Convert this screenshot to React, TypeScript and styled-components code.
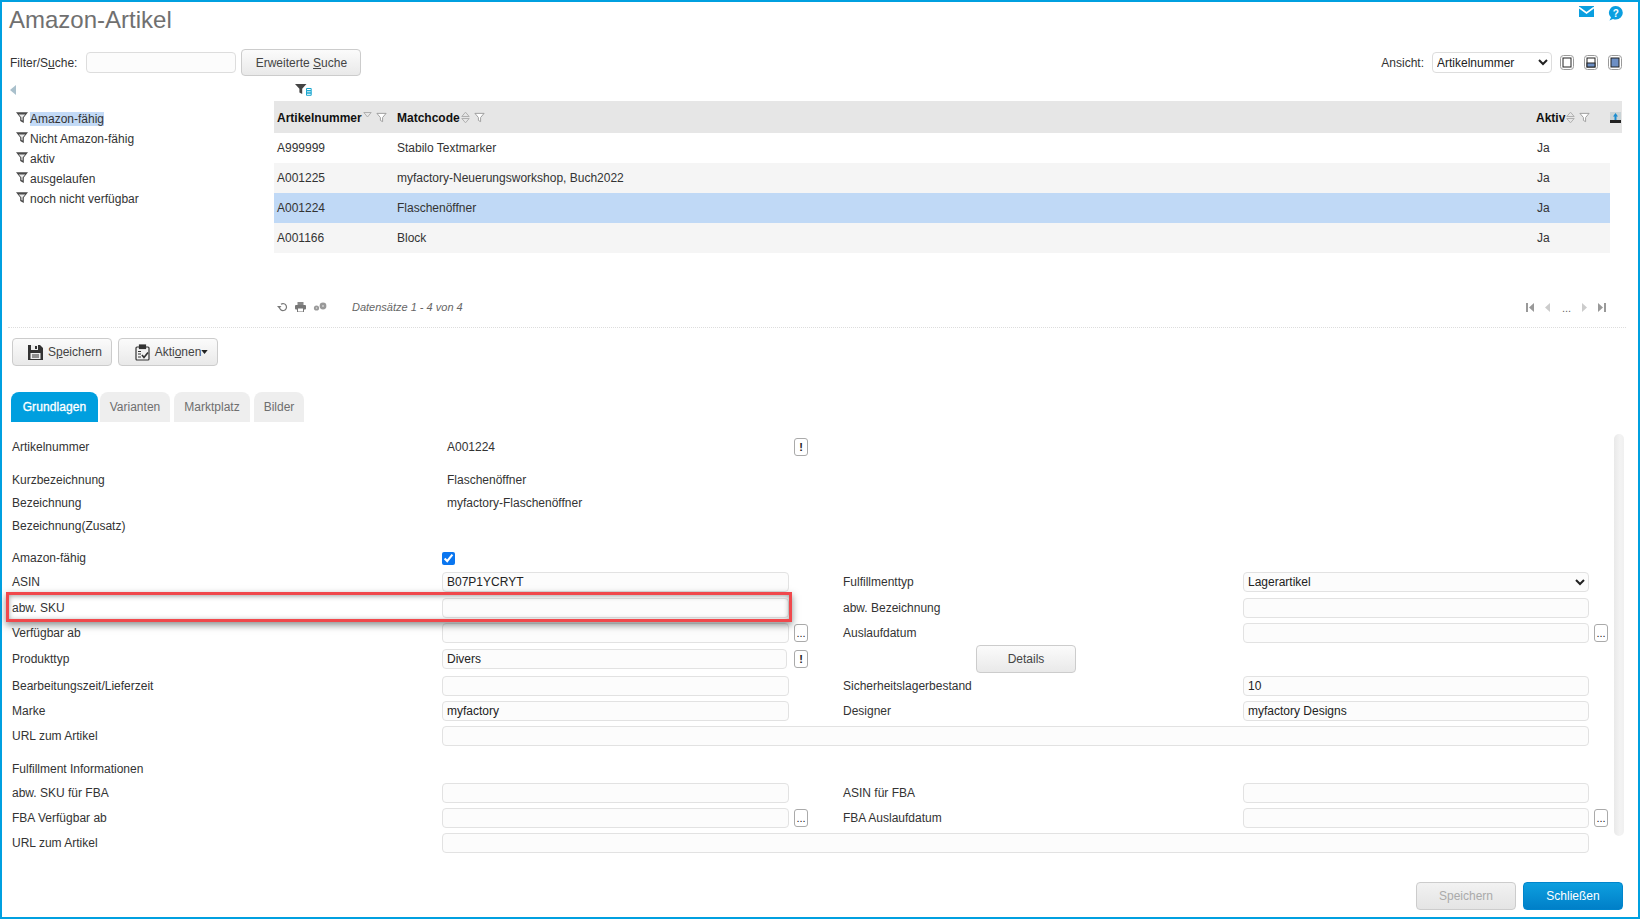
import React from "react";
import styled, { createGlobalStyle } from "styled-components";

const Global = createGlobalStyle`
  html, body { margin: 0; padding: 0; background: #fff; }
  body { font-family: "Liberation Sans", Arial, sans-serif; font-size: 12px; color: #333; }
  * { box-sizing: border-box; }
`;

const Frame = styled.div`
  width: 1640px; height: 919px; border: 2px solid #00a0e0; overflow: hidden; background: #fff;
  display: flex; flex-direction: column;
`;
const TitleRow = styled.div`
  height: 38px; display: flex; justify-content: space-between; align-items: flex-start; padding: 0 14px 0 7px;
`;
const Title = styled.h1`
  margin: 4px 0 0; font-size: 24px; line-height: 28px; font-weight: 400; color: #707070;
`;
const TopIcons = styled.div`
  display: flex; gap: 14px; padding-top: 4px; padding-right: 1px;
`;
const FilterBar = styled.div`
  margin-top: 9px; height: 27px; display: flex; align-items: center; padding: 0 16px 0 8px;
`;
const BarLabel = styled.span`
  color: #333; font-size: 12px;
`;
const SearchInput = styled.input`
  width: 150px; height: 21px; margin-left: 9px; border: 1px solid #ddd; border-radius: 4px; background: #fcfcfc;
`;
const Button = styled.button<{ $w: number; $h?: number; $pl?: number }>`
  width: ${p => p.$w}px; height: ${p => p.$h ?? 28}px; flex: none; padding: 0 0 0 ${p => p.$pl ?? 0}px; border: 1px solid #ccc; border-radius: 4px;
  background: linear-gradient(#fbfbfb, #e9e9e9); color: #444; font: 12px "Liberation Sans", Arial, sans-serif;
  display: inline-flex; align-items: center; justify-content: center; gap: 5px;
`;
const SearchButton = styled(Button)`
  margin-left: 5px;
`;
const Spacer = styled.div`
  flex: 1;
`;
const ViewSelect = styled.select`
  width: 120px; height: 21px; margin-left: 8px; border: 1px solid #ddd; border-radius: 4px; background: #fff; color: #222;
  font: 12px "Liberation Sans", Arial, sans-serif; padding: 0;
`;
const ViewButtons = styled.div`
  display: flex; gap: 10px; margin-left: 8px;
`;
const Split = styled.div`
  display: grid; grid-template-columns: 272px 1fr;
`;
const Side = styled.div`
  padding: 9px 0 0 8px;
`;
const Collapse = styled.div`
  width: 0; height: 0; border-style: solid; border-width: 5px 6px 5px 0; border-color: transparent #a9c0cc transparent transparent;
`;
const FilterList = styled.ul`
  list-style: none; margin: 14px 0 0; padding: 0 0 0 6px;
`;
const FilterItem = styled.li`
  height: 20px; display: flex; align-items: center; gap: 2px; color: #333;
`;
const FilterIcon = styled.span`
  display: flex; margin-bottom: 3px;
`;
const FilterName = styled.span<{ $on?: boolean }>`
  background: ${p => (p.$on ? "#c3daf6" : "transparent")}; line-height: 14px;
`;
const TableArea = styled.div`
  padding: 8px 16px 0 0;
`;
const TableTool = styled.div`
  height: 13px; margin: 0 0 4px 21px; display: flex;
`;
const HeaderRow = styled.div`
  height: 32px; padding-top: 1px; background: #e6e6e6; display: grid; grid-template-columns: 120px 1fr 77px 12px; align-items: center;
`;
const HeadCell = styled.div`
  display: flex; align-items: center; padding-left: 3px; font-size: 12px; font-weight: 700; color: #111; white-space: nowrap;
`;
const DataRow = styled.div<{ $bg: string }>`
  height: 30px; margin-right: 12px; background: ${p => p.$bg}; display: grid; grid-template-columns: 120px 1fr 76px; align-items: center; color: #333;
`;
const DataCell = styled.div`
  padding-left: 3px;
`;
const TableFoot = styled.div`
  margin-top: 44px; height: 20px; display: flex; align-items: center; padding-left: 3px; padding-right: 16px;
`;
const FootIcons = styled.div`
  display: flex; align-items: center; gap: 7px; width: 75px;
`;
const Records = styled.span`
  font-style: italic; font-size: 11px; color: #666;
`;
const Pager = styled.div`
  display: flex; align-items: center; gap: 10px; color: #666;
`;
const Dots = styled.span`
  font-size: 11px; line-height: 11px; padding-top: 3px; width: 8px; letter-spacing: 0;
`;
const Divider = styled.div`
  margin: 10px 12px 0 6px; border-top: 1px dotted #ddd;
`;
const ActionBar = styled.div`
  margin-top: 10px; padding-left: 10px; display: flex; gap: 6px;
`;
const Caret = styled.svg`
  margin-left: 0; vertical-align: 2px;
`;
const TabBar = styled.div`
  margin-top: 26px; padding-left: 9px; display: flex; height: 30px;
`;
const Tab = styled.div<{ $on?: boolean; $w: number; $ml: number }>`
  width: ${p => p.$w}px; margin-left: ${p => p.$ml}px; border-radius: 8px 8px 0 0; display: flex; align-items: center; justify-content: center;
  font-size: 12px; color: ${p => (p.$on ? "#fff" : "#6f6f6f")}; background: ${p => (p.$on ? "#009fdf" : "#eeeeee")};
  ${p => (p.$on ? "-webkit-text-stroke: .3px #fff; letter-spacing: .1px;" : "")}
`;
const FormArea = styled.div`
  margin-top: 12px; display: flex; align-items: flex-start;
`;
const Rows = styled.div`
  flex: 1; padding: 2px 0 0 10px;
`;
const Scroll = styled.div`
  width: 10px; height: 402px; margin-right: 14px; border-radius: 6px; background: linear-gradient(90deg, #e9e9e9, #f3f3f3 60%, #f0f0f0);
`;
const Row = styled.div<{ $mt?: number }>`
  margin-top: ${p => p.$mt ?? 0}px; height: 22px; display: grid; grid-template-columns: 430px 347px 54px 400px 346px 1fr; grid-template-rows: 22px; align-items: center;
`;
const Label = styled.div`
  color: #333; white-space: nowrap;
`;
const Value = styled.div`
  color: #333; padding-left: 5px;
`;
const Field = styled.input<{ $w?: number }>`
  width: ${p => (p.$w ? `${p.$w}px` : "100%")}; height: 20px; border: 1px solid #e2e2e2; border-radius: 4px; background: #fcfcfc; color: #222;
  font: 12px "Liberation Sans", Arial, sans-serif; padding: 0 4px;
`;
const WideField = styled(Field)`
  grid-column: 2 / 6;
`;
const SelectField = styled.select`
  width: 100%; height: 20px; border: 1px solid #e2e2e2; border-radius: 4px; background: #fcfcfc; color: #222;
  font: 12px "Liberation Sans", Arial, sans-serif; padding: 0;
`;
const Tiny = styled.button<{ $ml: number; $bold?: boolean }>`
  width: 14px; height: 18px; margin-left: ${p => p.$ml}px; padding: 0; border: 1px solid #aaa; border-radius: 3px; background: #fff; color: #222;
  font: ${p => (p.$bold ? 700 : 400)} 11px "Liberation Sans", Arial, sans-serif; display: flex; align-items: center; justify-content: center;
`;
const DetailsButton = styled(Button)`
  margin-left: 133px;
`;
const Check = styled.input`
  width: 13px; height: 13px; margin: 0; accent-color: #0a76f0;
`;
const Footer = styled.div`
  margin-top: 28px; padding-right: 15px; display: flex; justify-content: flex-end; gap: 7px;
`;
const DisabledButton = styled(Button)`
  background: linear-gradient(#f2f2f2, #e4e4e4); color: #aaa;
`;
const PrimaryButton = styled(Button)`
  border-color: #0085cc; background: linear-gradient(#0d9fdf, #007fc8); color: #fff;
`;
const Highlight = styled.div`
  position: absolute; left: 6px; top: 592px; width: 786px; height: 30px; border: 3px solid #f0484c;
  box-shadow: 0 3px 7px rgba(40, 50, 50, .55), inset 0 1px 5px rgba(40, 50, 50, .45); pointer-events: none;
`;
const Page = styled.div`
  position: relative; width: 1640px; height: 919px;
`;

const Funnel = ({ color = "#555", fill = "#fff", size = 12 }: { color?: string; fill?: string; size?: number }) => (
  <svg width={size} height={size} viewBox="0 0 12 12"><path d="M1 1.5h10L7.2 6v4.5l-2.4-1.3V6Z" fill={fill} stroke={color} strokeWidth="1" strokeLinejoin="round" /></svg>
);
const SideFunnel = () => (
  <svg width="12" height="11" viewBox="0 0 12 11">
    <path d="M0 .2h12L7.8 5.5V11L4.2 9V5.5Z" fill="#4a4a4a" />
    <path d="M2.8 2.4h6.4L6.6 5.4V8.6L5.4 8V5.4Z" fill="#e8e8e8" />
  </svg>
);
const Sort = ({ faded }: { faded?: boolean }) => (
  <svg width="9" height="13" viewBox="0 0 9 13" fill="none" stroke="#b0b0b0" strokeWidth="1">
    {!faded && <path d="M.8 5.5 4.5 1.2 8.2 5.5Z" />}
    <path d={faded ? "M.8 1.5h7.4L4.5 6Z" : "M.8 7.5 4.5 11.8 8.2 7.5Z"} />
  </svg>
);
const HeadIcons = styled.span`
  display: inline-flex; align-items: center; gap: 4px; margin-left: 1px;
`;
const Heads = ({ faded }: { faded?: boolean }) => (
  <HeadIcons><Sort faded={faded} /><Funnel color="#999" size={11} /></HeadIcons>
);
const Square = ({ mode }: { mode: 0 | 1 | 2 }) => (
  <svg width="14" height="15" viewBox="0 0 14 15">
    <rect x=".5" y=".5" width="13" height="14" rx="3" fill="#fff" stroke="#9a9a9a" />
    <rect x="3" y="3" width="8" height="9" fill={mode === 2 ? "#6d8fc4" : "#fff"} stroke="#222" strokeWidth="1" />
    {mode === 1 && <rect x="3" y="8" width="8" height="4" fill="#6d8fc4" stroke="#222" />}
  </svg>
);
const Tri = ({ dir, c = "#999", bar }: { dir: "l" | "r"; c?: string; bar?: boolean }) => (
  <svg width="8" height="9" viewBox="0 0 8 9">
    {dir === "l" ? (<>{bar && <rect x="0" y="0" width="2" height="9" fill={c} />}<path d={bar ? "M8 0v9L3 4.5Z" : "M6 0v9L1 4.5Z"} fill={c} /></>)
      : (<>{bar && <rect x="6" y="0" width="2" height="9" fill={c} />}<path d={bar ? "M0 0v9L5 4.5Z" : "M2 0v9L7 4.5Z"} fill={c} /></>)}
  </svg>
);

const rows = [
  { a: "A999999", m: "Stabilo Textmarker", bg: "#ffffff" },
  { a: "A001225", m: "myfactory-Neuerungsworkshop, Buch2022", bg: "#f5f5f5" },
  { a: "A001224", m: "Flaschenöffner", bg: "#c0d9f6" },
  { a: "A001166", m: "Block", bg: "#f5f5f5" },
];
const filters = ["Amazon-fähig", "Nicht Amazon-fähig", "aktiv", "ausgelaufen", "noch nicht verfügbar"];

export default function App() {
  return (
    <Page>
      <Global />
      <Frame>
        <TitleRow>
          <Title>Amazon-Artikel</Title>
          <TopIcons>
            <svg width="15" height="12" viewBox="0 0 15 12"><rect width="15" height="11" fill="#0a9fe0" /><path d="M0 1.5 7.5 7 15 1.5" fill="none" stroke="#fff" strokeWidth="1.6" /></svg>
            <svg width="15" height="15" viewBox="0 0 15 15"><path d="M7.8 0a7 6.8 0 0 1 0 13.6c-1 0-2-.2-2.8-.6L1.5 14.5 3 11.6A7 6.8 0 0 1 7.8 0Z" fill="#0a9fe0" /><text x="7.8" y="10.6" fontSize="10" fontWeight="700" textAnchor="middle" fill="#fff" fontFamily="Liberation Sans">?</text></svg>
          </TopIcons>
        </TitleRow>
        <FilterBar>
          <BarLabel>Filter/S<u>u</u>che:</BarLabel>
          <SearchInput />
          <SearchButton $w={120} $h={27}><span>Erweiterte <u>S</u>uche</span></SearchButton>
          <Spacer />
          <BarLabel>Ansicht:</BarLabel>
          <ViewSelect defaultValue="Artikelnummer"><option>Artikelnummer</option></ViewSelect>
          <ViewButtons><Square mode={0} /><Square mode={1} /><Square mode={2} /></ViewButtons>
        </FilterBar>
        <Split>
          <Side>
            <Collapse />
            <FilterList>
              {filters.map((f, i) => (
                <FilterItem key={f}><FilterIcon><SideFunnel /></FilterIcon><FilterName $on={i === 0}>{f}</FilterName></FilterItem>
              ))}
            </FilterList>
          </Side>
          <TableArea>
            <TableTool>
              <svg width="17" height="13" viewBox="0 0 17 13">
                <path d="M0 0h11.5L7.2 4.8V10L4.4 8.5V4.8Z" fill="#444" />
                <path d="M11.5 4.5H16.2V6.7H11.5ZM11.5 6.7H16.2V9H11.5ZM11.5 9H16.2V11.3H11.5Z" fill="none" stroke="#18a6cf" strokeWidth="1" />
              </svg>
            </TableTool>
            <HeaderRow>
              <HeadCell>Artikelnummer<Heads faded /></HeadCell>
              <HeadCell>Matchcode<Heads /></HeadCell>
              <HeadCell>Aktiv<Heads /></HeadCell>
              <svg width="11" height="11" viewBox="0 0 11 11"><rect width="11" height="11" fill="#c9d3d6" /><rect y="8" width="11" height="3" fill="#222" /><path d="M5.5 1 8 4.5H6.5V8h-2V4.5H3Z" fill="#1a8ccf" /></svg>
            </HeaderRow>
            {rows.map(r => (
              <DataRow key={r.a} $bg={r.bg}>
                <DataCell>{r.a}</DataCell>
                <DataCell>{r.m}</DataCell>
                <DataCell>Ja</DataCell>
              </DataRow>
            ))}
            <TableFoot>
              <FootIcons>
                <svg width="11" height="10" viewBox="0 0 11 10" fill="none" stroke="#777" strokeWidth="1.2"><path d="M2.5 5A3.5 3.5 0 1 0 4 2.2" /><path d="M0 4h4.5L2.2 6.5Z" fill="#777" stroke="none" /></svg>
                <svg width="11" height="10" viewBox="0 0 11 10"><rect x="2.5" y="0" width="6" height="3" fill="#888" /><rect x="0" y="3" width="11" height="4.5" rx="1" fill="#777" /><rect x="2.5" y="6" width="6" height="4" fill="#fff" stroke="#777" /></svg>
                <svg width="14" height="10" viewBox="0 0 14 10"><circle cx="3.5" cy="6" r="2.6" fill="#999" /><circle cx="10" cy="4" r="3.4" fill="#999" /><circle cx="10" cy="4" r="1.1" fill="#ccc" /><circle cx="3.5" cy="6" r=".8" fill="#ddd" /></svg>
              </FootIcons>
              <Records>Datensätze 1 - 4 von 4</Records>
              <Spacer />
              <Pager>
                <Tri dir="l" bar />
                <Tri dir="l" c="#ccc" />
                <Dots>...</Dots>
                <Tri dir="r" c="#ccc" />
                <Tri dir="r" bar />
              </Pager>
            </TableFoot>
          </TableArea>
        </Split>
        <Divider />
        <ActionBar>
          <Button $w={100} $pl={5}>
            <svg width="16" height="15" viewBox="0 0 16 15"><path d="M1 0h12l3 3v12H1Z" fill="#333" /><rect x="4" y="0" width="7" height="5" fill="#eee" /><rect x="8" y="1" width="2" height="3" fill="#333" /><rect x="3.5" y="8" width="10" height="6" fill="#eee" /><path d="M5 10h7M5 12h7" stroke="#333" /></svg>
            <span>S<u>p</u>eichern</span>
          </Button>
          <Button $w={100} $pl={7}>
            <svg width="15" height="17" viewBox="0 0 15 17" fill="none" stroke="#333" strokeWidth="1.2"><rect x="1" y="3" width="13" height="13" rx="1" fill="#f2f2f2" /><rect x="4.5" y="1" width="6" height="3.5" fill="#333" /><path d="M3 7.5h3M3 10h3M3 13h3" /><path d="m7 11 2 2.5 4-5" strokeWidth="1.7" /></svg>
            <span>Akti<u>o</u>nen<Caret width="7" height="4" viewBox="0 0 8 5"><path d="M0 0h8L4 5Z" fill="#222" /></Caret></span>
          </Button>
        </ActionBar>
        <TabBar>
          <Tab $on $w={87} $ml={0}>Grundlagen</Tab>
          <Tab $w={70} $ml={2}>Varianten</Tab>
          <Tab $w={76} $ml={4}>Marktplatz</Tab>
          <Tab $w={50} $ml={4}>Bilder</Tab>
        </TabBar>
        <FormArea>
          <Rows>
            <Row><Label>Artikelnummer</Label><Value>A001224</Value><Tiny $ml={5} $bold>!</Tiny></Row>
            <Row $mt={11}><Label>Kurzbezeichnung</Label><Value>Flaschenöffner</Value></Row>
            <Row $mt={1}><Label>Bezeichnung</Label><Value>myfactory-Flaschenöffner</Value></Row>
            <Row $mt={1}><Label>Bezeichnung(Zusatz)</Label></Row>
            <Row $mt={10}><Label>Amazon-fähig</Label><Check type="checkbox" defaultChecked /></Row>
            <Row $mt={2}><Label>ASIN</Label><Field defaultValue="B07P1YCRYT" /><span /><Label>Fulfillmenttyp</Label><SelectField defaultValue="Lagerartikel"><option>Lagerartikel</option></SelectField></Row>
            <Row $mt={4}><Label>abw. SKU</Label><Field /><span /><Label>abw. Bezeichnung</Label><Field /></Row>
            <Row $mt={3}><Label>Verfügbar ab</Label><Field /><Tiny $ml={5}>...</Tiny><Label>Auslaufdatum</Label><Field /><Tiny $ml={5}>...</Tiny></Row>
            <Row $mt={4}><Label>Produkttyp</Label><Field $w={345} defaultValue="Divers" /><Tiny $ml={5} $bold>!</Tiny><DetailsButton $w={100}>Details</DetailsButton></Row>
            <Row $mt={5}><Label>Bearbeitungszeit/Lieferzeit</Label><Field /><span /><Label>Sicherheitslagerbestand</Label><Field defaultValue="10" /></Row>
            <Row $mt={3}><Label>Marke</Label><Field defaultValue="myfactory" /><span /><Label>Designer</Label><Field defaultValue="myfactory Designs" /></Row>
            <Row $mt={3}><Label>URL zum Artikel</Label><WideField /></Row>
            <Row $mt={11}><Label>Fulfillment Informationen</Label></Row>
            <Row $mt={2}><Label>abw. SKU für FBA</Label><Field /><span /><Label>ASIN für FBA</Label><Field /></Row>
            <Row $mt={3}><Label>FBA Verfügbar ab</Label><Field /><Tiny $ml={5}>...</Tiny><Label>FBA Auslaufdatum</Label><Field /><Tiny $ml={5}>...</Tiny></Row>
            <Row $mt={3}><Label>URL zum Artikel</Label><WideField /></Row>
          </Rows>
          <Scroll />
        </FormArea>
        <Footer>
          <DisabledButton $w={100}>Speichern</DisabledButton>
          <PrimaryButton $w={100}>Schließen</PrimaryButton>
        </Footer>
      </Frame>
      <Highlight />
    </Page>
  );
}
